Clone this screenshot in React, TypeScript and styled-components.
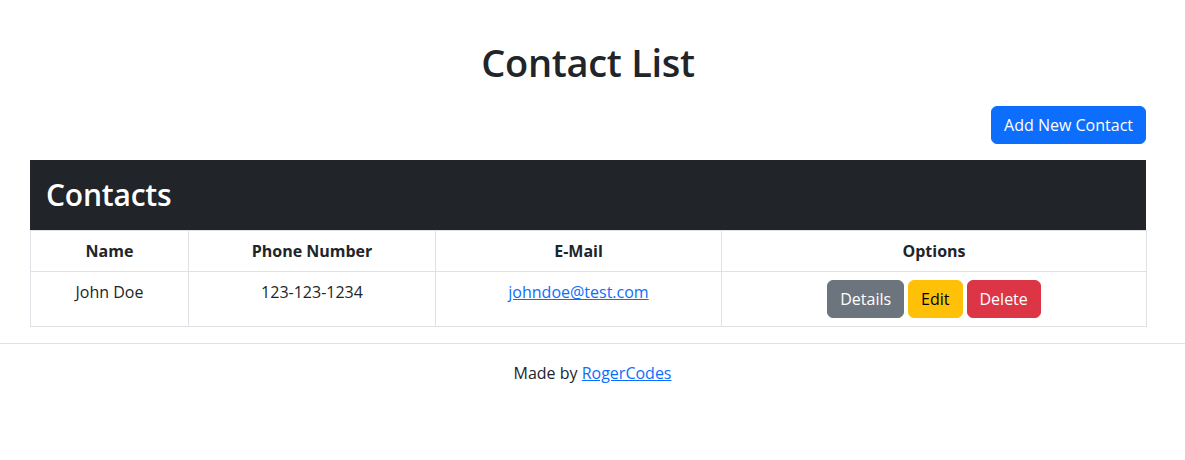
import React from "react";
import styled, { createGlobalStyle } from "styled-components";

const Global = createGlobalStyle`
  *, *::before, *::after { box-sizing: border-box; }
  body {
    margin: 0;
    font-family: "Open Sans", "Noto Sans", sans-serif;
    font-size: 16px;
    line-height: 1.5;
    color: #212529;
    background: #fff;
  }
`;

const Page = styled.div`
  display: flex;
  flex-direction: column;
`;

const Container = styled.main`
  padding: 38px 39px 0 30px;
  display: flex;
  flex-direction: column;
`;

const Title = styled.h1`
  margin: 0 0 20px;
  font-size: 38px;
  font-weight: 600;
  line-height: 48px;
  text-align: center;
  letter-spacing: -0.3px;
`;

const Toolbar = styled.div`
  display: flex;
  justify-content: flex-end;
  margin-bottom: 16px;
`;

const Button = styled.button<{ $bg: string; $fg?: string }>`
  display: inline-block;
  font-family: inherit;
  font-size: 16px;
  line-height: 1.5;
  padding: 6px 12px;
  border: 1px solid ${(p) => p.$bg};
  border-radius: 6px;
  background: ${(p) => p.$bg};
  color: ${(p) => p.$fg ?? "#fff"};
  cursor: pointer;
`;

const Card = styled.section`
  margin-bottom: 16px;
`;

const CardHeader = styled.h2`
  margin: 0;
  padding: 16px;
  background: #212529;
  color: #fff;
  font-size: 30px;
  font-weight: 600;
  line-height: 38px;
  letter-spacing: -0.2px;
`;

const Table = styled.table`
  width: 100%;
  border-collapse: collapse;
  table-layout: fixed;
  text-align: center;
`;

const Th = styled.th<{ $w: number }>`
  width: ${(p) => p.$w}px;
  padding: 8px;
  border: 1px solid #dee2e6;
  font-weight: 700;
  vertical-align: top;
`;

const Td = styled.td`
  padding: 8px;
  border: 1px solid #dee2e6;
  vertical-align: top;
`;

const Link = styled.a`
  color: #0d6efd;
  text-decoration: underline;
`;

const Actions = styled.div`
  display: flex;
  justify-content: center;
  gap: 4px;
`;

const Footer = styled.footer`
  border-top: 1px solid #dee2e6;
  padding-top: 17px;
  text-align: center;
`;

export default function App() {
  return (
    <Page>
      <Global />
      <Container>
        <Title>Contact List</Title>
        <Toolbar>
          <Button $bg="#0d6efd">Add New Contact</Button>
        </Toolbar>
        <Card>
          <CardHeader>Contacts</CardHeader>
          <Table>
            <thead>
              <tr>
                <Th $w={158}>Name</Th>
                <Th $w={247}>Phone Number</Th>
                <Th $w={286}>E-Mail</Th>
                <Th $w={425}>Options</Th>
              </tr>
            </thead>
            <tbody>
              <tr>
                <Td>John Doe</Td>
                <Td>123-123-1234</Td>
                <Td>
                  <Link href="#">johndoe@test.com</Link>
                </Td>
                <Td>
                  <Actions>
                    <Button $bg="#6c757d">Details</Button>
                    <Button $bg="#ffc107" $fg="#000">Edit</Button>
                    <Button $bg="#dc3545">Delete</Button>
                  </Actions>
                </Td>
              </tr>
            </tbody>
          </Table>
        </Card>
      </Container>
      <Footer>
        Made by <Link href="#">RogerCodes</Link>
      </Footer>
    </Page>
  );
}
